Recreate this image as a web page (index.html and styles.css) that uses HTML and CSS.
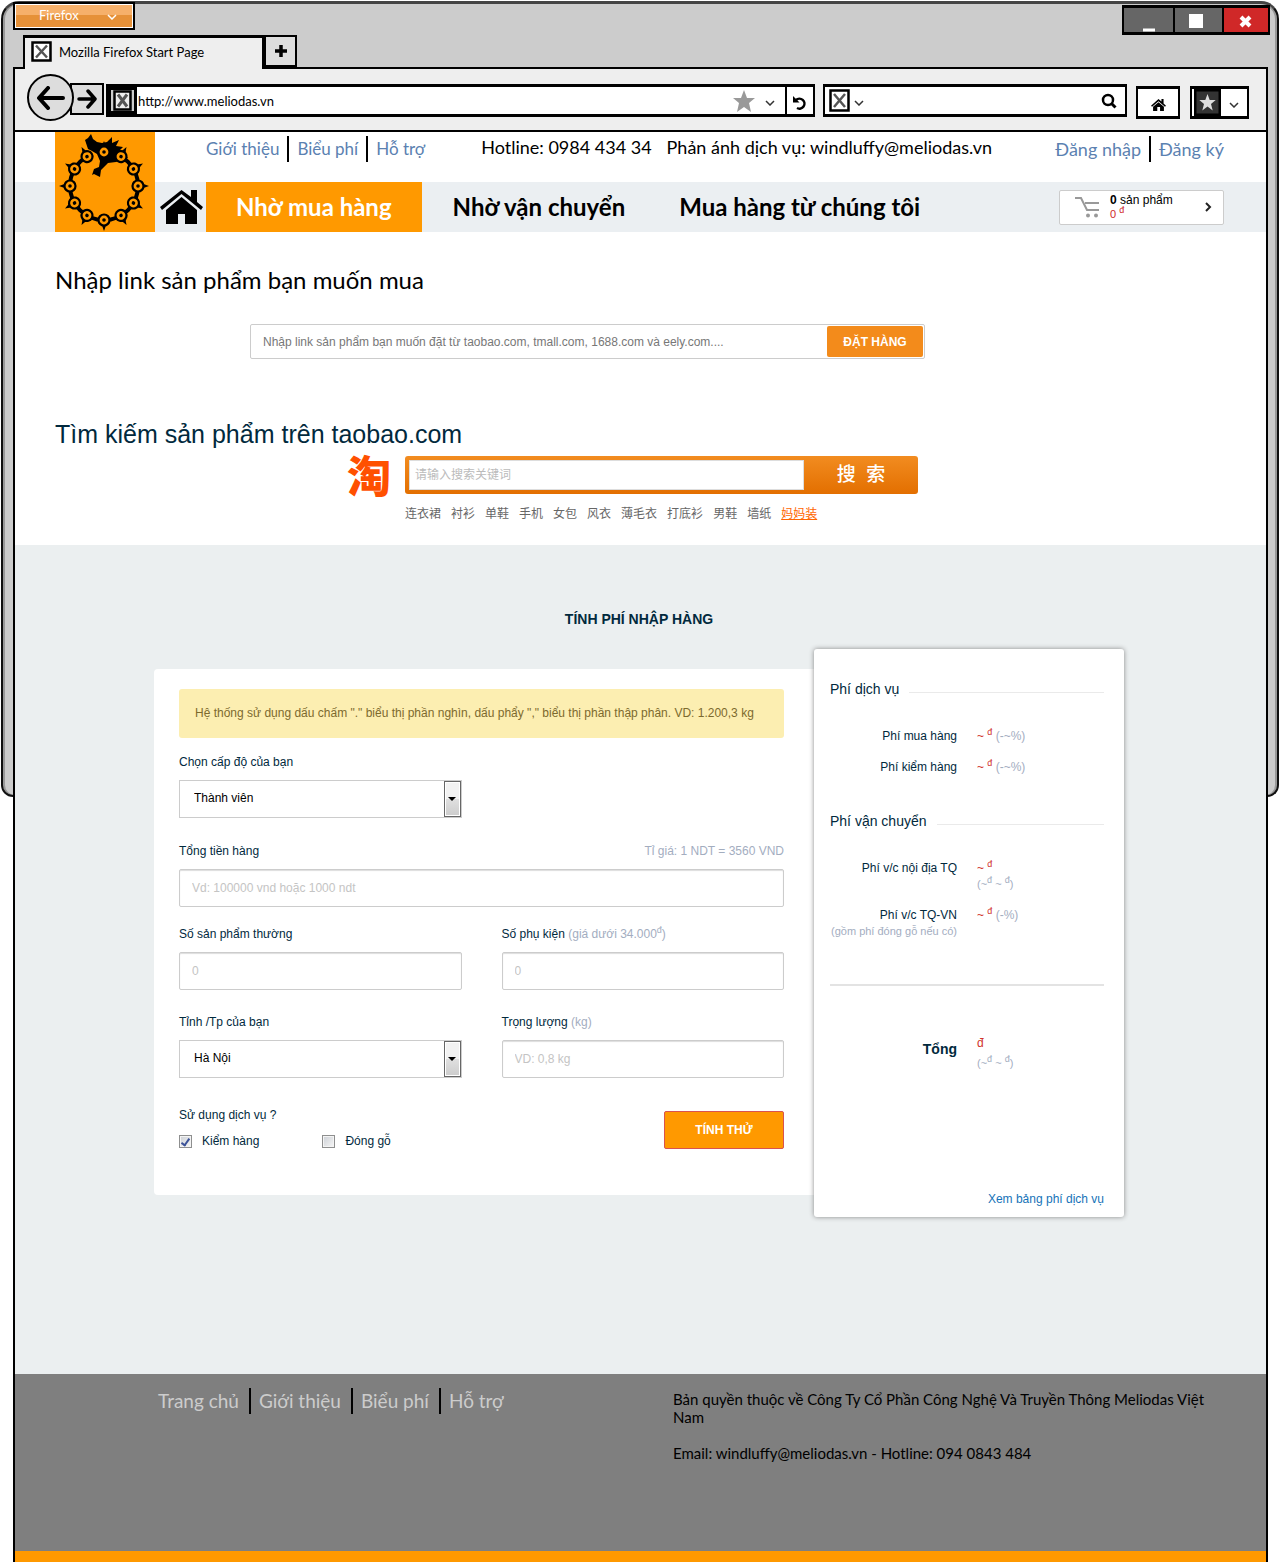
FILE: index.html
```html
<!DOCTYPE html>
<html lang="vi">
<head>
<meta charset="utf-8">
<meta name="viewport" content="width=device-width, initial-scale=1">
<title>Meliodas</title>
<link rel="stylesheet" href="styles.css">
</head>
<body>
<div class="window">
  <div class="titlebar">
    <button class="app-menu" type="button">Firefox
      <svg width="10" height="6" viewBox="0 0 10 6"><path d="M1 1l4 4 4-4" fill="none" stroke="currentColor" stroke-width="1.5"/></svg>
    </button>
    <div class="win-buttons">
      <button type="button" aria-label="Minimize"><svg width="49" height="24"><path d="M19 22h12" stroke="#fff" stroke-width="3"/></svg></button>
      <button type="button" aria-label="Maximize"><svg width="47" height="24"><path d="M14 6h14v14h-14z" fill="#fff"/></svg></button>
      <button class="close" type="button" aria-label="Close"><svg width="44" height="24"><path d="M17 9l9 9m0-9l-9 9" stroke="#fff" stroke-width="4"/></svg></button>
    </div>
  </div>
  <div class="tabs">
    <div class="tab">
      <svg class="favicon" width="21" height="21" viewBox="0 0 21 21"><path d="M1.500 1.500h18v18h-18z" fill="#fff" stroke="#000" stroke-width="2.500"/><path d="M5 4.500l11 12m0-12l-11 12" stroke="#555" stroke-width="2.500"/></svg>
      Mozilla Firefox Start Page
    </div>
    <button class="new-tab" type="button" aria-label="New tab"><svg width="14" height="14"><path d="M7 1v12M1 7h12" stroke="#000" stroke-width="3.500"/></svg></button>
  </div>

  <div class="page">
    <div class="toolbar">
      <button class="back" type="button" aria-label="Back"><svg width="28" height="24" viewBox="0 0 28 24"><path d="M26 12H3M11 2L2 12l9 10" fill="none" stroke="#000" stroke-width="4" stroke-linecap="round" stroke-linejoin="round"/></svg></button>
      <button class="forward" type="button" aria-label="Forward"><svg width="20" height="20" viewBox="0 0 20 20"><path d="M2 10h15M11 2l7 8-7 8" fill="none" stroke="#000" stroke-width="3.500" stroke-linecap="round" stroke-linejoin="round"/></svg></button>
      <div class="address">
        <span class="site-icon"><svg width="19" height="21" viewBox="0 0 19 21"><path d="M1.500 1.500h16v18h-16z" fill="#eee" stroke="#000" stroke-width="2.500"/><path d="M5 4.500l9 12m0-12l-9 12" stroke="#555" stroke-width="3"/></svg></span>
        <input class="url" type="text" aria-label="Address" value="http://www.meliodas.vn">
        <svg class="star" width="22" height="22" viewBox="0 0 22 22"><path d="M11 0l3 8h8l-6 5 2 9-7-5-7 5 2-9-6-5h8z" fill="#999"/></svg>
        <svg class="chev" width="10" height="6" viewBox="0 0 10 6"><path d="M1 1l4 4 4-4" fill="none" stroke="#333" stroke-width="1.500"/></svg>
        <button class="reload" type="button" aria-label="Reload"><svg width="16" height="16" viewBox="0 0 16 16"><path d="M4 5a5 5 0 1 1 1 8" fill="none" stroke="#000" stroke-width="2.500"/><path d="M1 1v6.500h6.500z"/></svg></button>
      </div>
      <div class="search">
        <svg width="21" height="23" viewBox="0 0 21 23"><path d="M1.500 1.500h18v20h-18z" fill="#fff" stroke="#000" stroke-width="2.500"/><path d="M5 5l11 13m0-13l-11 13" stroke="#555" stroke-width="2.500"/></svg>
        <svg class="chev" width="10" height="6" viewBox="0 0 10 6"><path d="M1 1l4 4 4-4" fill="none" stroke="#333" stroke-width="1.500"/></svg>
        <input type="search" aria-label="Search">
        <svg width="16" height="16" viewBox="0 0 16 16"><circle cx="7" cy="7" r="5" fill="none" stroke="#000" stroke-width="2.500"/><path d="M10.500 10.500l4 4" stroke="#000" stroke-width="3"/></svg>
      </div>
      <button class="tool home-tool" type="button" aria-label="Home"><svg width="15" height="12" viewBox="0 0 43 34"><path d="M21.500 0L0 19l3 3L21.500 6 40 22l3-3-7-6V0h-6v7z"/><path d="M6 22L21.500 9 37 22v12H26V23h-8v11H6z"/></svg></button>
      <button class="tool marks" type="button" aria-label="Bookmarks"><svg width="27" height="27" viewBox="0 0 27 27"><path d="M1 1h25v25H1z" fill="#333" stroke="#000" stroke-width="3"/><path d="M13.500 5l2.200 6h6l-4.700 4 1.700 6.500-5.200-4-5.200 4L10 15l-4.700-4h6z" fill="#ddd"/></svg><svg class="drop" width="10" height="6" viewBox="0 0 10 6"><path d="M1 1l4 4 4-4" fill="none" stroke="#333" stroke-width="1.500"/></svg></button>
    </div>

    <header class="header">
      <a class="logo" href="#" aria-label="Meliodas">
        <svg viewBox="0 0 100 100">
          <defs>
            <g id="link">
              <path d="M47 14.500L49 9l2 5.500z"/>
              <circle cx="49" cy="20" r="5.500" fill="#f90" stroke="#000" stroke-width="2.200"/>
              <circle cx="49" cy="20" r="1.800"/>
            </g>
          </defs>
          <circle cx="49" cy="54" r="34" fill="none" stroke="#000" stroke-width="4" stroke-dasharray="196 18" transform="rotate(-90 49 54)"/>
          <path d="M30 8l3-2 3-4 2 5 4 3 5 1 5-1 5-5v6l7-3-3 6 7 1-3 3 8 8-12 4-8 1-7 7-1 7-6-3-2 1 2-6 5-2 1-6-3-7-5-3-4-2z"/>
          <use href="#link"/>
          <use href="#link" transform="rotate(30 49 54)"/>
          <use href="#link" transform="rotate(60 49 54)"/>
          <use href="#link" transform="rotate(90 49 54)"/>
          <use href="#link" transform="rotate(120 49 54)"/>
          <use href="#link" transform="rotate(150 49 54)"/>
          <use href="#link" transform="rotate(180 49 54)"/>
          <use href="#link" transform="rotate(210 49 54)"/>
          <use href="#link" transform="rotate(240 49 54)"/>
          <use href="#link" transform="rotate(270 49 54)"/>
          <use href="#link" transform="rotate(300 49 54)"/>
          <use href="#link" transform="rotate(330 49 54)"/>
        </svg>
      </a>
      <div class="topline">
        <nav class="links">
          <a href="#">Giới thiệu</a><a href="#">Biểu phí</a><a href="#">Hỗ trợ</a>
        </nav>
        <p class="contact"><span>Hotline: 0984 434 34</span><span>Phản ánh dịch vụ: windluffy@meliodas.vn</span></p>
        <nav class="links account">
          <a href="#">Đăng nhập</a><a href="#">Đăng ký</a>
        </nav>
      </div>
      <div class="mainline">
        <a class="home" href="#" aria-label="Trang chủ"><svg width="43" height="34" viewBox="0 0 43 34"><path d="M21.500 0L0 17l2 3L21.500 4 41 20l2-3-6-5V0h-6v7z"/><path d="M6 20L21.500 7 37 20v14H25V24h-7v10H6z"/></svg></a>
        <nav class="menu">
          <a class="active" href="#">Nhờ mua hàng</a>
          <a href="#">Nhờ vận chuyển</a>
          <a href="#">Mua hàng từ chúng tôi</a>
        </nav>
        <a class="cart" href="#">
          <svg width="25" height="21" viewBox="0 0 25 21"><path d="M0 1h6l6 12h12M10 6h14" fill="none" stroke="#999" stroke-width="2"/><circle cx="13" cy="18.500" r="2" fill="#999"/><circle cx="21" cy="18.500" r="2" fill="#999"/></svg>
          <span class="cart-text"><span><b>0</b> sản phẩm</span><span class="price">0 <sup>đ</sup></span></span>
          <svg width="7" height="10" viewBox="0 0 7 10"><path d="M1 1l4 4-4 4" fill="none" stroke="#222" stroke-width="2"/></svg>
        </a>
      </div>
    </header>

    <main>
      <section class="order">
        <h1><label for="link-input">Nhập link sản phẩm bạn muốn mua</label></h1>
        <form class="order-form">
          <input id="link-input" type="text" placeholder="Nhập link sản phẩm bạn muốn đặt từ taobao.com, tmall.com, 1688.com và eely.com....">
          <button type="button">ĐẶT HÀNG</button>
        </form>
        <h2>Tìm kiếm sản phẩm trên taobao.com</h2>
        <div class="taobao">
          <span class="tao">淘</span>
          <div>
            <form class="tao-form">
              <input type="text" aria-label="请输入搜索关键词" placeholder="请输入搜索关键词">
              <button type="button">搜&nbsp; 索</button>
            </form>
            <nav class="keywords">
              <a href="#">连衣裙</a><a href="#">衬衫</a><a href="#">单鞋</a><a href="#">手机</a><a href="#">女包</a><a href="#">风衣</a><a href="#">薄毛衣</a><a href="#">打底衫</a><a href="#">男鞋</a><a href="#">墙纸</a><a class="hot" href="#">妈妈装</a>
            </nav>
          </div>
        </div>
      </section>

      <section class="fees">
        <h2>TÍNH PHÍ NHẬP HÀNG</h2>
        <div class="calc">
          <form class="calc-form">
            <p class="notice">Hệ thống sử dụng dấu chấm "." biểu thị phần nghìn, dấu phẩy "," biểu thị phần thập phân. VD: 1.200,3 kg</p>
            <div class="field level">
              <label for="level">Chọn cấp độ của bạn</label>
              <span class="select"><select id="level"><option>Thành viên</option></select></span>
            </div>
            <div class="field wide">
              <div class="label-row"><label for="total">Tổng tiền hàng</label><span class="hint">Tỉ giá: 1 NDT = 3560 VND</span></div>
              <input id="total" type="text" placeholder="Vd: 100000 vnd hoặc 1000 ndt">
            </div>
            <div class="field">
              <label for="normal">Số sản phẩm thường</label>
              <input id="normal" type="text" placeholder="0">
            </div>
            <div class="field">
              <label for="extra">Số phụ kiện <span class="hint">(giá dưới 34.000<sup>đ</sup>)</span></label>
              <input id="extra" type="text" placeholder="0">
            </div>
            <div class="field">
              <label for="city">Tỉnh /Tp của bạn</label>
              <span class="select"><select id="city"><option>Hà Nội</option></select></span>
            </div>
            <div class="field">
              <label for="weight">Trọng lượng <span class="hint">(kg)</span></label>
              <input id="weight" type="text" placeholder="VD: 0,8 kg">
            </div>
            <fieldset class="services">
              <legend>Sử dụng dịch vụ ?</legend>
              <label><input type="checkbox" checked>Kiểm hàng</label>
              <label><input type="checkbox">Đóng gỗ</label>
            </fieldset>
            <button class="submit" type="button">TÍNH THỬ</button>
          </form>

          <aside class="result">
            <h3>Phí dịch vụ</h3>
            <dl>
              <dt>Phí mua hàng</dt><dd>~ <sup>đ</sup> <span class="hint">(-~%)</span></dd>
              <dt>Phí kiểm hàng</dt><dd>~ <sup>đ</sup> <span class="hint">(-~%)</span></dd>
            </dl>
            <h3>Phí vận chuyển</h3>
            <dl>
              <dt>Phí v/c nội địa TQ</dt><dd>~ <sup>đ</sup><small>(~<sup>đ</sup> ~ <sup>đ</sup>)</small></dd>
              <dt>Phí v/c TQ-VN<small>(gồm phí đóng gỗ nếu có)</small></dt><dd>~ <sup>đ</sup> <span class="hint">(-%)</span></dd>
            </dl>
            <dl class="sum">
              <dt>Tổng</dt><dd>đ<small>(~<sup>đ</sup> ~ <sup>đ</sup>)</small></dd>
            </dl>
            <a class="table-link" href="#">Xem bảng phí dịch vụ</a>
          </aside>
        </div>
      </section>
    </main>

    <footer class="footer">
      <nav class="links">
        <a href="#">Trang chủ</a><a href="#">Giới thiệu</a><a href="#">Biểu phí</a><a href="#">Hỗ trợ</a>
      </nav>
      <div class="legal">
        <p>Bản quyền thuộc về Công Ty Cổ Phần Công Nghệ Và Truyền Thông Meliodas Việt Nam</p>
        <p>Email: windluffy@meliodas.vn - Hotline: 094 0843 484</p>
      </div>
    </footer>
  </div>
</div>
</body>
</html>
```
FILE: styles.css
```css
*,
*::before,
*::after {
  box-sizing: border-box;
}

body,
p,
h1,
h2,
h3,
dl,
dd,
fieldset,
legend {
  margin: 0;
  padding: 0;
}

body {
  background: #fff;
  color: #000;
  font: 12px/16px "Liberation Sans", "Noto Sans CJK SC", sans-serif;
}

a {
  color: inherit;
  text-decoration: none;
}

button,
input,
select {
  font: inherit;
  color: inherit;
  margin: 0;
  padding: 0;
  border: 0;
  border-radius: 0;
  background: none;
}

svg {
  display: block;
  flex: none;
}

/* Browser window */
.window {
  position: relative;
  padding: 2px 12px 0 13px;
}

.window::before {
  content: "";
  position: absolute;
  z-index: -1;
  top: 1px;
  left: 1px;
  right: 1px;
  height: 796px;
  background: #ccc;
  border: 2px solid #111;
  border-top: 3px solid #444;
  border-radius: 18px 18px 12px 12px;
  box-shadow: inset 2px 0 #999, inset -2px 0 #999;
}

.titlebar,
.tabs,
.toolbar,
.header,
.order h1,
.footer {
  font-family: Lato, "Liberation Serif", serif;
}

.titlebar {
  display: flex;
  justify-content: space-between;
  height: 32px;
}

.app-menu {
  display: flex;
  align-items: center;
  justify-content: space-between;
  width: 122px;
  height: 28px;
  padding: 0 16px 3px 24px;
  border: 2px solid #000;
  box-shadow: inset 0 0 0 1px #fff;
  background: linear-gradient(#f6b06a 45%, #e69138 45%);
  color: #fff;
  font-size: 13px;
}

.app-menu svg {
  margin-top: 5px;
}

.win-buttons {
  display: flex;
  height: 30px;
  margin: 3px -2px 0 0;
  border: 2px solid #000;
  border-width: 3px 2px;
}

.win-buttons button {
  background: #666;
  border-right: 2px solid #000;
}

.win-buttons .close {
  background: #d02828;
  border: 0;
}

.tabs {
  display: flex;
  align-items: flex-end;
  padding-left: 10px;
  height: 33px;
}

.tab {
  position: relative;
  display: flex;
  align-items: center;
  gap: 7px;
  width: 242px;
  height: 34px;
  margin-bottom: -2px;
  padding: 0 0 4px 6px;
  border: 2px solid #000;
  border-width: 3px 3px 0 2px;
  background: #eee;
  font-size: 13px;
}

.new-tab {
  display: grid;
  place-items: center;
  width: 33px;
  height: 32px;
  margin-left: -1px;
  border: 2px solid #000;
  background: #ddd;
}

.page {
  border: 2px solid #000;
  border-bottom: 0;
  background: #fff;
}

.toolbar {
  display: flex;
  align-items: center;
  height: 64px;
  padding: 2px 17px 0 12px;
  border-bottom: 3px solid #000;
  margin-bottom: -1px;
  background: #eee;
}

.back {
  z-index: 1;
  display: grid;
  place-items: center;
  width: 47px;
  height: 47px;
  border: 2px solid #000;
  border-radius: 50%;
  background: #ddd;
  margin-top: -6px;
}

.forward {
  display: grid;
  place-items: center;
  width: 34px;
  height: 32px;
  margin: -4px 1px 0 -4px;
  border: 2px solid #000;
  background: #ddd;
}

.address,
.search,
.tool {
  display: flex;
  align-items: center;
  height: 33px;
  border: 3px solid #000;
  border-width: 3px 2px;
  background: #fff;
}

.address {
  flex: 1;
  margin-left: 1px;
}

.site-icon {
  display: grid;
  place-items: center;
  width: 29px;
  height: 27px;
  border: 3px solid #000;
  background: #ccc;
}

.url {
  flex: 1;
  min-width: 0;
  padding-left: 1px;
  font-size: 13px;
}

.star {
  margin-right: 10px;
}

.chev {
  margin-right: 10px;
  margin-top: 4px;
}

.reload {
  display: grid;
  place-items: center;
  height: 27px;
  padding: 4px 5px 0;
  border-left: 2px solid #000;
}

.search {
  width: 304px;
  margin-left: 8px;
  padding: 0 8px 0 4px;
}

.search .chev {
  margin-left: 4px;
}

.search input {
  flex: 1;
  min-width: 0;
}

.tool {
  margin-top: 4px;
}

.home-tool {
  width: 44px;
  margin-left: 9px;
  padding-top: 4px;
  justify-content: center;
}

.marks {
  width: 59px;
  margin-left: 10px;
  padding-left: 2px;
  gap: 8px;
}

.drop {
  margin-top: 5px;
}

/* Site header */
.header {
  display: grid;
  grid-template-columns: 100px 1fr;
  grid-template-rows: 50px 50px;
  padding: 0 42px 0 40px;
  background: linear-gradient(#fff 50%, #ebeff2 50%);
}

.logo {
  grid-row: span 2;
  background: #f90;
}

.topline,
.mainline {
  display: flex;
  align-items: center;
}

.topline {
  align-items: flex-start;
  padding: 4px 0 0 51px;
  font-size: 18px;
  white-space: nowrap;
}

.links {
  display: flex;
  color: #5b81b1;
  font-size: 17px;
  line-height: 26px;
}

.links a + a {
  margin-left: 8px;
  padding-left: 8px;
  border-left: 2px solid #000;
}

.contact {
  display: flex;
  gap: 15px;
  margin-left: 56px;
  line-height: 22px;
}

.account {
  margin-left: auto;
  font-size: 18px;
}

.home {
  width: 51px;
  padding-left: 5px;
}

.menu {
  display: flex;
  font-size: 24px;
  font-weight: 700;
  line-height: 50px;
}

.menu a {
  padding: 0 27px;
}

.menu .active {
  margin-right: 4px;
  padding: 0 30px;
  background: #f90;
  color: #fff;
}

.cart {
  display: flex;
  align-items: center;
  width: 165px;
  height: 35px;
  margin-left: auto;
  padding: 0 11px 0 15px;
  border: 1px solid #ccc;
  border-radius: 2px;
  background: #fff;
  font: 12px/14px "Liberation Sans", sans-serif;
}

.cart-text {
  display: grid;
  flex: 1;
  margin-left: 10px;
}

.price {
  color: #d02828;
  font-size: 11px;
}

sup {
  font-size: 9px;
  line-height: 0;
}

/* Link order and search */
.order {
  padding: 35px 40px 0;
  height: 313px;
}

.order h1 {
  font-size: 24px;
  font-weight: 400;
  line-height: 26px;
}

.order-form {
  display: flex;
  width: 675px;
  max-width: 100%;
  height: 35px;
  margin: 31px 0 0 195px;
  padding: 1px;
  border: 1px solid #ccc;
  border-radius: 2px;
  color: #777;
}

.order-form input {
  flex: 1;
  padding-left: 11px;
}

::placeholder {
  color: inherit;
  opacity: 1;
}

.order-form button {
  width: 96px;
  border-radius: 2px;
  background: #f38b1b;
  color: #fff;
  font-weight: 700;
}

.order h2 {
  margin-top: 59px;
  color: #01293d;
  font-size: 25px;
  font-weight: 400;
  line-height: 32px;
}

.taobao {
  display: flex;
  gap: 10px;
  padding: 6px 0 0 290px;
}

.tao {
  width: 50px;
  padding-left: 2px;
  color: #ff5000;
  font: 900 44px/36px "Noto Sans CJK SC", sans-serif;
}

.tao-form {
  display: flex;
  width: 513px;
  height: 38px;
  padding: 4px;
  border-radius: 3px;
  background: linear-gradient(#f28c20, #e36f00);
}

.tao-form input {
  flex: 1;
  padding-left: 5px;
  border: 1px solid #ddd;
  background: #fff;
  color: #bbb;
}

.tao-form button {
  width: 110px;
  padding-left: 4px;
  color: #fff;
  font-size: 19px;
  font-weight: 500;
}

.keywords {
  display: flex;
  gap: 10px;
  margin-top: 12px;
  color: #666;
}

.hot {
  color: #f60;
  text-decoration: underline;
}

/* Fee calculator */
.fees {
  padding: 66px 142px 157px 139px;
  background: #ebeff0;
  color: #01293d;
}

.fees h2 {
  font-size: 14px;
  line-height: 16px;
  text-align: center;
}

.calc {
  display: grid;
  grid-template-columns: 1fr 310px;
  align-items: start;
  margin-top: 22px;
}

.calc-form {
  display: grid;
  grid-template-columns: 1fr 1fr;
  column-gap: 40px;
  margin-top: 20px;
  padding: 20px 30px 46px 25px;
  border-radius: 4px 0 0 4px;
  background: #fff;
}

.notice {
  grid-column: span 2;
  height: 49px;
  padding: 0 16px;
  border-radius: 3px;
  background: #fceeb1;
  color: #7c6a2e;
  line-height: 49px;
}

.field {
  display: grid;
  grid-template-rows: 16px 38px;
  row-gap: 10px;
  margin-top: 20px;
}

.level {
  margin-top: 16px;
  margin-bottom: 5px;
}

.wide {
  grid-column: span 2;
}

.level + .wide {
  margin-bottom: -1px;
}

.label-row {
  display: flex;
  justify-content: space-between;
}

.hint {
  color: #a3adbf;
}

.field > input {
  padding: 0 12px;
  border: 1px solid #ccc;
  border-radius: 2px;
  box-shadow: inset 0 1px 1px #ddd;
  color: #c4c4c4;
}

.field > label,
.label-row {
  align-self: center;
}

.field:nth-of-type(n+5) {
  margin-top: 24px;
}

.select {
  position: relative;
  display: grid;
  border: 1px solid #ccc;
  color: #000;
}

.select select {
  appearance: none;
  padding: 0 30px 2px 14px;
}

.select::before,
.select::after {
  content: "";
  position: absolute;
  pointer-events: none;
}

.select::before {
  top: 0;
  right: 0;
  bottom: 0;
  width: 17px;
  border: 1px solid #666;
  box-shadow: inset 0 0 0 1px #fff;
  background: linear-gradient(#f2f2f2 50%, #e0e0e0 50%, #ccc);
}

.select::after {
  top: 16px;
  right: 5px;
  border: 4px solid transparent;
  border-top-color: #000;
  border-bottom: 0;
}

.services {
  display: flex;
  gap: 63px;
  margin-top: 29px;
  border: 0;
}

.services legend {
  margin-bottom: 10px;
}

.services label {
  display: flex;
  align-items: center;
  gap: 10px;
}

.services input {
  appearance: none;
  display: grid;
  place-items: center;
  width: 13px;
  height: 13px;
  border: 1px solid #8e8f8f;
  box-shadow: inset 0 0 0 1px #f4f4f4;
  background: linear-gradient(135deg, #ccd0d6, #f6f6f6);
}

.services input:checked::before {
  content: "";
  width: 5px;
  height: 9px;
  border: solid #3b5298;
  border-width: 0 2px 2px 0;
  transform: rotate(35deg);
}

.submit {
  justify-self: end;
  width: 120px;
  height: 38px;
  margin-top: 33px;
  border: 1px solid #d9534f;
  border-radius: 2px;
  background: #f90;
  color: #fff;
  font-weight: 700;
}

.result {
  display: flex;
  flex-direction: column;
  min-height: 568px;
  padding: 32px 20px 10px 16px;
  border-radius: 3px;
  background: #fff;
  box-shadow: 0 0 5px #888;
}

.result h3 {
  display: flex;
  align-items: center;
  gap: 10px;
  font-size: 14px;
  font-weight: 400;
  line-height: 16px;
}

.result h3::after {
  content: "";
  flex: 1;
  margin-top: 6px;
  border-top: 1px solid #eaeaea;
}

.result dl {
  display: grid;
  grid-template-columns: 127px 1fr;
  gap: 15px 20px;
  margin: 31px 0 38px;
}

.result dt {
  text-align: right;
}

.result dd {
  color: #d0342c;
}

.result small {
  display: block;
  color: #a3adbf;
  font-size: 11px;
}

.result .sum {
  margin: 7px 0 0;
  padding-top: 49px;
  border-top: 2px solid #e3e3e3;
}

.sum dt {
  font-size: 14px;
  font-weight: 700;
  line-height: 28px;
}

.sum dd small {
  margin-top: 4px;
}

.table-link {
  margin-top: auto;
  color: #1673b8;
  text-align: right;
}

/* Footer */
.footer {
  display: grid;
  grid-template-columns: 515px 1fr;
  height: 188px;
  padding: 14px 36px 0 143px;
  border-bottom: 11px solid #f90;
  background: #7f7f7f;
}

.footer .links {
  align-self: start;
  color: #ccc;
  font-size: 19px;
}

.footer .links a + a {
  margin-left: 10px;
}

.legal {
  display: grid;
  align-content: start;
  gap: 18px;
  padding-top: 2px;
  font-size: 15px;
  line-height: 18px;
}
```
